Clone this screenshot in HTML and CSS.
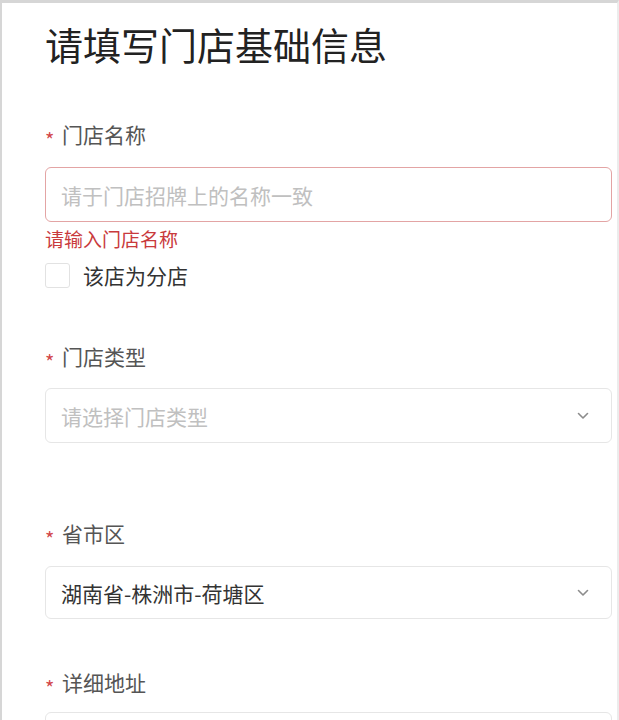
FILE: index.html
```html
<!DOCTYPE html>
<html lang="zh-CN">
<head>
<meta charset="utf-8">
<title>请填写门店基础信息</title>
<link rel="stylesheet" href="styles.css">
</head>
<body>
<div class="page">
  <h1 class="title">请填写门店基础信息</h1>

  <div class="item item-name">
    <div class="label"><span class="req">*</span>门店名称</div>
    <div class="field field-error"><span class="placeholder">请于门店招牌上的名称一致</span></div>
    <div class="error-msg">请输入门店名称</div>
    <label class="check-row"><span class="checkbox"></span><span class="check-text">该店为分店</span></label>
  </div>

  <div class="item item-type">
    <div class="label"><span class="req">*</span>门店类型</div>
    <div class="field select"><span class="placeholder">请选择门店类型</span>
      <svg class="chev" viewBox="0 0 12 8" width="12" height="8"><path d="M1.5 1.5 L6 6 L10.5 1.5" fill="none" stroke="#8c8c8c" stroke-width="1.6" stroke-linecap="round" stroke-linejoin="round"/></svg>
    </div>
  </div>

  <div class="item item-area">
    <div class="label"><span class="req">*</span>省市区</div>
    <div class="field select field-short"><span class="value">湖南省-株洲市-荷塘区</span>
      <svg class="chev" viewBox="0 0 12 8" width="12" height="8"><path d="M1.5 1.5 L6 6 L10.5 1.5" fill="none" stroke="#8c8c8c" stroke-width="1.6" stroke-linecap="round" stroke-linejoin="round"/></svg>
    </div>
  </div>

  <div class="item item-addr">
    <div class="label"><span class="req">*</span>详细地址</div>
    <div class="field"></div>
  </div>
</div>
</body>
</html>
```

FILE: styles.css
```css
* { box-sizing: border-box; }
html, body { margin: 0; padding: 0; background: #fff; }
body {
  font-family: "Noto Sans CJK SC", "Noto Sans", sans-serif;
  color: #333;
  height: 720px;
  overflow: hidden;
}
.page {
  border-top: 3px solid #d6d6d6;
  border-left: 2px solid #d6d6d6;
  border-right: 2px solid #ececec;
  height: 720px;
  overflow: hidden;
  padding: 0 5px 0 43px;
}
.title {
  margin: 19px 0 0 0;
  font-size: 38px;
  line-height: 44px;
  font-weight: 400;
  color: #222;
}
.item { display: flex; flex-direction: column; }
.label {
  font-size: 21px;
  line-height: 30px;
  height: 30px;
  color: #555;
  display: flex;
  align-items: flex-start;
}
.req {
  color: #d2474a;
  font-size: 20px;
  width: 17px;
  line-height: 30px;
  padding-top: 6px;
}
.item-name { margin-top: 53px; }
.item-type { margin-top: 53px; }
.item-area { margin-top: 75px; }
.item-addr { margin-top: 48px; }
.field {
  margin-top: 18px;
  height: 55px;
  border: 1.5px solid #e6e6e6;
  border-radius: 6px;
  display: flex;
  align-items: center;
  padding: 0 22px 0 15px;
  font-size: 21px;
  flex-shrink: 0;
}
.item-type .field { margin-top: 17px; }
.field-short { height: 53px; }
.item-addr .field { margin-top: 15px; }
.field-error { border-color: #e3a4a4; }
.placeholder { color: #c0c0c0; }
.value { color: #333; }
.select { justify-content: space-between; }
.chev { display: block; }
.error-msg {
  margin-top: 5px;
  font-size: 19px;
  line-height: 24px;
  color: #c93a3c;
}
.check-row {
  margin-top: 11px;
  display: flex;
  align-items: center;
  height: 26px;
}
.checkbox {
  width: 25px;
  height: 25px;
  border: 1.5px solid #e2e2e2;
  border-radius: 3px;
  margin-right: 13px;
  flex-shrink: 0;
}
.check-text {
  font-size: 21px;
  color: #333;
}
```
